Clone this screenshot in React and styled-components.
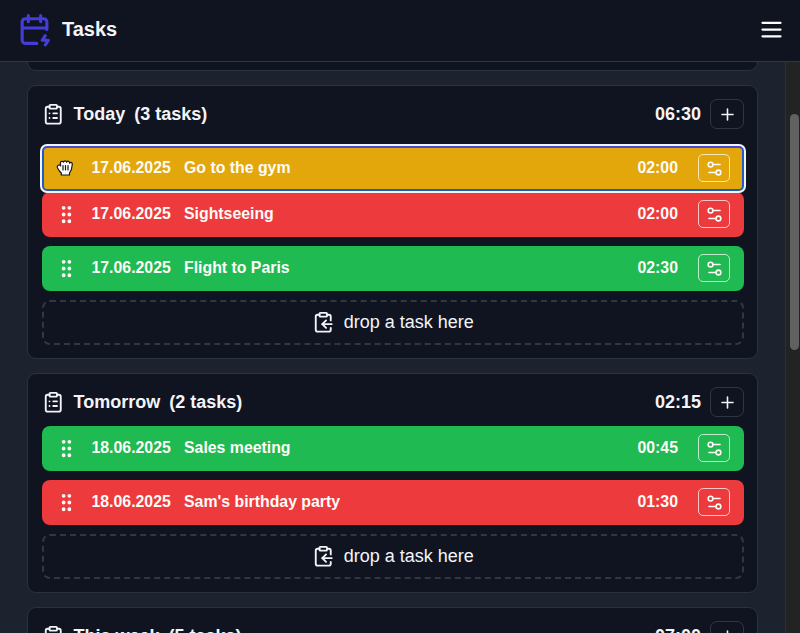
import React from "react";
import styled, { createGlobalStyle, css } from "styled-components";
import { ClipboardList, ClipboardCopy, GripVertical, Settings2, Plus } from "lucide-react";

const GlobalStyle = createGlobalStyle`
  * { box-sizing: border-box; }
  body {
    margin: 0;
    background: #1c232e;
    color: #f3f4f8;
    font-family: "Liberation Sans", Arial, sans-serif;
    overflow: hidden;
  }
`;

const Page = styled.div`
  display: flex;
  flex-direction: column;
  width: 800px;
  height: 633px;
  overflow: hidden;
`;

const Header = styled.header`
  display: flex;
  align-items: center;
  flex: 0 0 62px;
  padding: 0 15px 3px 16px;
  background: #101420;
  border-bottom: 1px solid #303743;
`;

const Title = styled.h1`
  flex: 1;
  margin: 0 0 0 9px;
  font-size: 20px;
  line-height: 24px;
`;

const MenuButton = styled.button`
  display: flex;
  padding: 1px 0 0;
  border: 0;
  background: none;
  color: #fff;
`;

const Body = styled.div`
  display: flex;
  flex: 1;
  min-height: 0;
`;

const Board = styled.main`
  display: flex;
  flex-direction: column;
  gap: 14px;
  flex: 1;
  padding: 0 27px;
  overflow: hidden;
`;

const ScrollTrack = styled.div`
  flex: 0 0 15px;
  padding: 52px 1px 0 4px;
  background: #232323;
  border-left: 1px solid #303030;
`;

const ScrollThumb = styled.div`
  height: 236px;
  border-radius: 5px;
  background: #616162;
`;

const Card = styled.section`
  flex: none;
  padding: 0 13px 13px 14px;
  border: 1px solid #2b323e;
  border-radius: 9px;
  background: #101420;
`;

const CardEnd = styled(Card)`
  height: 9px;
  padding: 0;
  border-top: 0;
  border-radius: 0 0 9px 9px;
`;

const CardHead = styled.div`
  display: flex;
  align-items: center;
  height: 52px;
  padding: 4px 0 0;
  font-size: 18px;
  font-weight: 700;
`;

const GroupName = styled.span`
  margin-left: 9px;
`;

const GroupCount = styled.span`
  flex: 1;
  margin-left: 9px;
`;

const AddButton = styled.button`
  display: flex;
  align-items: center;
  justify-content: center;
  width: 34px;
  height: 30px;
  margin-left: 9px;
  padding: 0;
  border: 1px solid #2f3642;
  border-radius: 7px;
  background: none;
  color: #f3f4f8;
`;

const List = styled.div`
  display: grid;
  grid-auto-rows: 45px;
  gap: 9px;
`;

const tones = { yellow: "#e3a70b", red: "#ec3a3d", green: "#1fba51" };

const Task = styled.div`
  display: flex;
  align-items: center;
  padding: 0 14px 1px 13px;
  border-radius: 8px;
  background: ${(p) => tones[p.$tone]};
  color: #fdfbf8;
  font-size: 15.85px;
  font-weight: 700;
  ${(p) =>
    p.$held &&
    css`
      position: relative;
      z-index: 1;
      transform: translateY(8px);
      border-radius: 5px;
      outline: 2px solid #f1f5fd;
      box-shadow: inset 0 2px 0 #4548d8, inset 0 0 0 2px #1c5cc4;
    `}
`;

const Handle = styled.span`
  display: flex;
  flex: 0 0 36.5px;
`;

const DateText = styled.span`
  flex: 0 0 92.5px;
`;

const Name = styled.span`
  flex: 1;
`;

const OptionsButton = styled.button`
  display: flex;
  align-items: center;
  justify-content: center;
  width: 32px;
  height: 28px;
  margin-left: 20px;
  padding: 0;
  border: 1px solid rgba(255, 255, 255, 0.7);
  border-radius: 5px;
  background: none;
  color: #fdfbf8;
`;

const DropZone = styled.div`
  display: flex;
  align-items: center;
  justify-content: center;
  gap: 9px;
  border: 2px dashed #303744;
  border-radius: 8px;
  font-size: 18px;
`;

const groups = [
  {
    name: "Today",
    count: 3,
    total: "06:30",
    tasks: [
      { date: "17.06.2025", name: "Go to the gym", time: "02:00", tone: "yellow", held: true },
      { date: "17.06.2025", name: "Sightseeing", time: "02:00", tone: "red" },
      { date: "17.06.2025", name: "Flight to Paris", time: "02:30", tone: "green" },
    ],
  },
  {
    name: "Tomorrow",
    count: 2,
    total: "02:15",
    tasks: [
      { date: "18.06.2025", name: "Sales meeting", time: "00:45", tone: "green" },
      { date: "18.06.2025", name: "Sam's birthday party", time: "01:30", tone: "red" },
    ],
  },
  { name: "This week", count: 5, total: "07:00", tasks: [] },
];

const CalendarLogo = () => (
  <svg width="37" height="37" viewBox="0 0 24 24" fill="none" stroke="#453ddb" strokeWidth="2" strokeLinecap="round" strokeLinejoin="round">
    <path d="M13.5 21H6a2 2 0 0 1-2-2V7a2 2 0 0 1 2-2h12a2 2 0 0 1 2 2v5M16 3v4M8 3v4M4 11h16M19 16l-2 3h4l-2 3" />
  </svg>
);

const MenuIcon = () => (
  <svg width="27" height="27" viewBox="0 0 24 24" fill="none" stroke="currentColor" strokeWidth="2" strokeLinecap="round">
    <path d="M4 6h16M4 12h16M4 18h16" />
  </svg>
);

const HandSvg = styled.svg`
  margin: -1px 0 1px 1px;
`;

const GrabHand = () => (
  <HandSvg width="18" height="18" viewBox="0 0 18 18" fill="#fff" stroke="#171717" strokeWidth="1.2" strokeLinecap="round" strokeLinejoin="round">
    <path d="M3.8 7.1C1.9 6.6.9 8 1.4 9.7l2 3.3 1.9 2v2h8.2v-2l1.8-3.2 1-5.3c.3-2-1.6-2.7-2.7-1.3.2-2-2.1-2.7-3-1-.5-1.7-2.6-1.7-3 0C6.600 2.700 4.300 3.200 4.300 5.200l.4 2.600" />
    <path d="M7 7.500v4.500M9.500 7.500v4.500M12 7.500v4.500" />
  </HandSvg>
);

function TaskRow({ task }) {
  return (
    <Task $tone={task.tone} $held={task.held}>
      <Handle>{task.held ? <GrabHand /> : <GripVertical size={23} />}</Handle>
      <DateText>{task.date}</DateText>
      <Name>{task.name}</Name>
      <span>{task.time}</span>
      <OptionsButton>
        <Settings2 size={19} />
      </OptionsButton>
    </Task>
  );
}

function TaskGroup({ group }) {
  return (
    <Card>
      <CardHead>
        <ClipboardList size={22.5} />
        <GroupName>{group.name}</GroupName>
        <GroupCount>({group.count} tasks)</GroupCount>
        <span>{group.total}</span>
        <AddButton>
          <Plus size={19} />
        </AddButton>
      </CardHead>
      <List>
        {group.tasks.map((task) => (
          <TaskRow key={task.name} task={task} />
        ))}
        <DropZone>
          <ClipboardCopy size={22.5} />
          drop a task here
        </DropZone>
      </List>
    </Card>
  );
}

export default function App() {
  return (
    <Page>
      <GlobalStyle />
      <Header>
        <CalendarLogo />
        <Title>Tasks</Title>
        <MenuButton>
          <MenuIcon />
        </MenuButton>
      </Header>
      <Body>
        <Board>
          <CardEnd />
          {groups.map((group) => (
            <TaskGroup key={group.name} group={group} />
          ))}
        </Board>
        <ScrollTrack>
          <ScrollThumb />
        </ScrollTrack>
      </Body>
    </Page>
  );
}
